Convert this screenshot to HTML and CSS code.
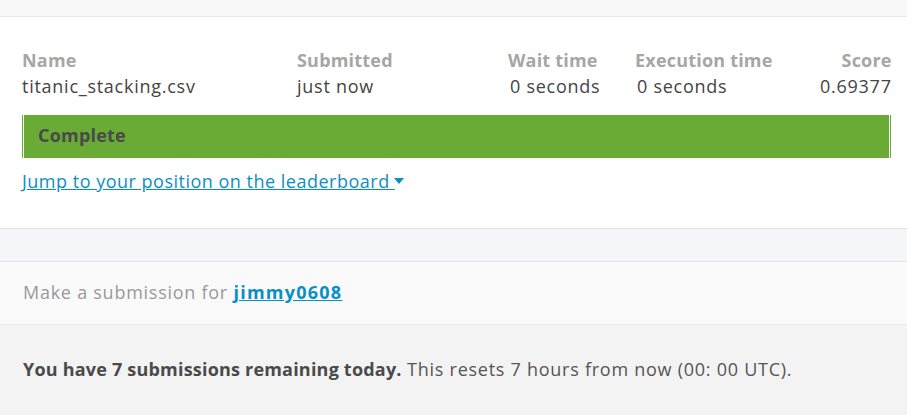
FILE: index.html
```html
<!DOCTYPE html>
<html>
<head>
<meta charset="utf-8">
<link rel="stylesheet" href="styles.css">
</head>
<body>
<div class="topbar"></div>
<section class="results">
  <div class="grid">
    <div class="hd">Name</div>
    <div class="hd">Submitted</div>
    <div class="hd">Wait time</div>
    <div class="hd">Execution time</div>
    <div class="hd right">Score</div>
    <div class="val">titanic_stacking.csv</div>
    <div class="val">just now</div>
    <div class="val nudge">0 seconds</div>
    <div class="val nudge">0 seconds</div>
    <div class="val right">0.69377</div>
  </div>
  <div class="status">Complete</div>
  <a class="jump" href="#">Jump to your position on the leaderboard <span class="caret"></span></a>
</section>
<div class="spacer"></div>
<div class="make">Make a submission for <a href="#" class="user">jimmy0608</a></div>
<div class="remaining"><strong>You have 7 submissions remaining today.</strong> This resets 7 hours from now (00: 00 UTC).</div>
</body>
</html>
```
FILE: styles.css
```css
html, body { margin: 0; padding: 0; }
body {
  font-family: "Open Sans", "Liberation Sans", sans-serif;
  font-size: 18px;
  letter-spacing: 0.74px;
  color: #444;
  background: #fff;
  width: 907px;
  height: 415px;
  overflow: hidden;
}
strong, .hd, .status, .user { letter-spacing: 0.2px; }
.topbar {
  height: 16px;
  background: #f8f8f8;
  border-bottom: 1px solid #e8e8e8;
}
.results {
  padding: 30px 16px 0 22px;
  height: 181px;
  border-bottom: 1px solid #e3e3e3;
}
.grid {
  display: grid;
  grid-template-columns: 275px 211px 127px 185px 1fr;
  line-height: 26px;
}
.hd { color: #a6a6a6; font-weight: 700; }
.val { color: #444; }
.nudge { padding-left: 2px; }
.right { text-align: right; }
.status {
  margin-top: 16px;
  height: 43px;
  line-height: 41px;
  background: #69ab34;
  box-shadow: inset 1px 0 0 #69ab34, inset 2px 0 0 #fff, inset -1px 0 0 #69ab34, inset -2px 0 0 #fff;
  padding-left: 16px;
  font-weight: 700;
  color: #4a4a4a;
}
.jump {
  display: inline-block;
  margin-top: 11px;
  color: #0a8fc5;
  text-decoration: underline;
  line-height: 24px;
  letter-spacing: 0.5px;
}
.caret {
  display: inline-block;
  width: 0; height: 0;
  border-left: 5px solid transparent;
  border-right: 5px solid transparent;
  border-top: 6px solid #0a8fc5;
  vertical-align: middle;
  margin-left: -1px;
  position: relative;
  top: -2px;
}
.spacer {
  height: 32px;
  background: #f4f6f7;
  border-bottom: 1px solid #e3e3e3;
}
.make {
  height: 62px;
  line-height: 60px;
  background: #fafafa;
  border-bottom: 1px solid #eaeaea;
  padding-left: 23px;
  color: #999;
}
.user { color: #0a8fc5; font-weight: 700; letter-spacing: 1.25px; }
.remaining {
  background: #f3f3f3;
  height: 90px;
  line-height: 88px;
  padding-left: 23px;
  color: #555;
}
.remaining strong { color: #4a4a4a; }
```
